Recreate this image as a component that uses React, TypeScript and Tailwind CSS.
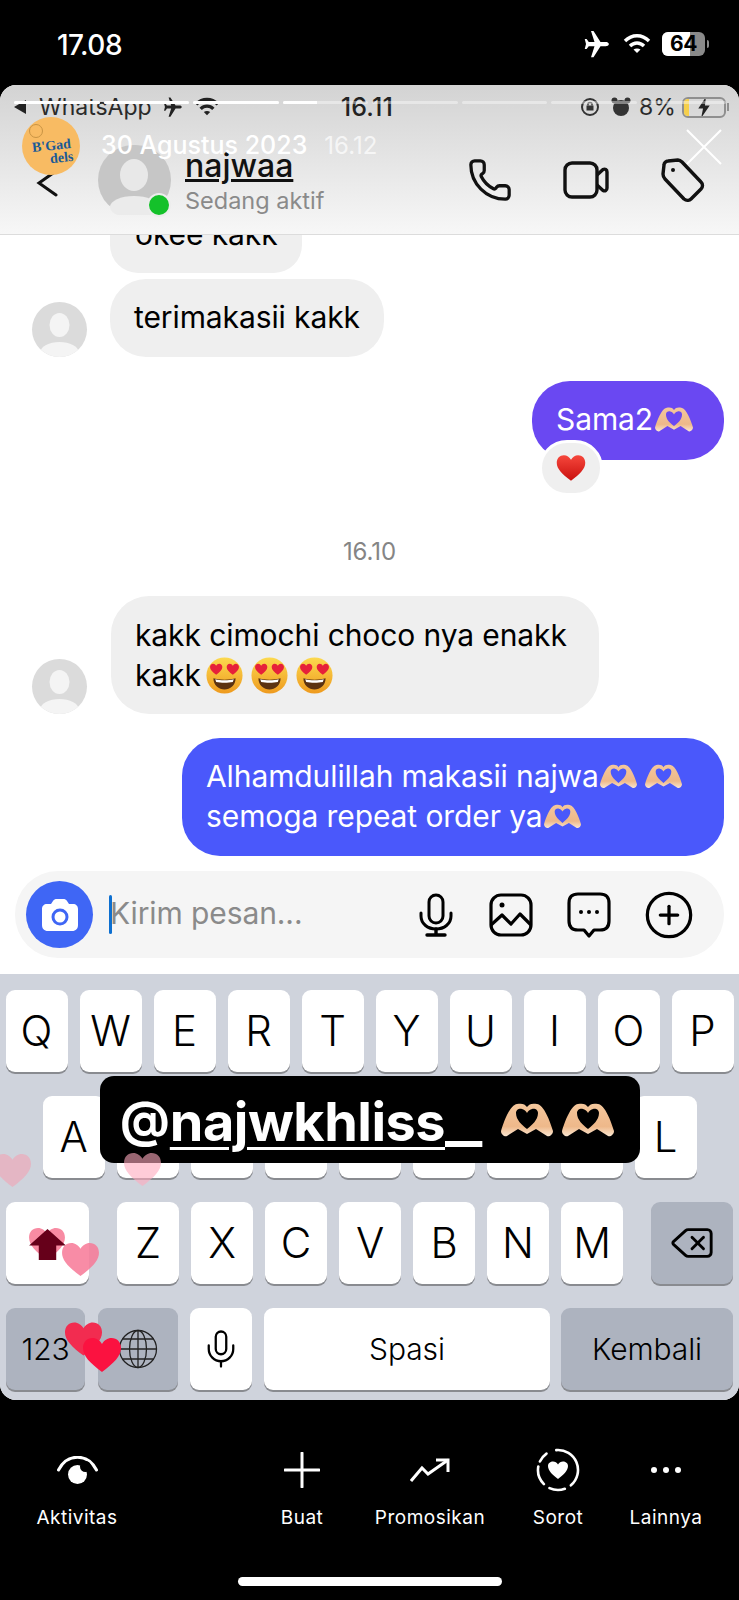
import { CirclePlus, Delete, Mic, Phone } from "lucide-react";

const heartPath =
  "M20 35 C 8 26, 1 19, 1 11 C 1 5, 5 1, 10.500 1 C 14.500 1, 18 3.500, 20 7 C 22 3.500, 25.500 1, 29.500 1 C 35 1, 39 5, 39 11 C 39 19, 32 26, 20 35 Z";

function HeartHands({ className }: { className: string }) {
  return (
    <svg viewBox="0 0 52 34" className={className}>
      <defs>
        <linearGradient id="tangan" x1="0" y1="0" x2="0" y2="1">
          <stop offset="0" stopColor="#f4c79c" />
          <stop offset="0.700" stopColor="#eeb88a" />
          <stop offset="1" stopColor="#fbe6d0" />
        </linearGradient>
      </defs>
      <path
        fillRule="evenodd"
        fill="url(#tangan)"
        d="M0 28 C 3 18, 9 2, 16 1 C 21 0, 24 1, 26 4 C 28 1, 31 0, 36 1 C 43 2, 49 18, 52 28 C 52 32, 48 34, 46 33 L 35 26 L 26 31 L 17 26 L 6 33 C 4 34, 0 32, 0 28 Z M26 26 C 21 22, 15 17, 15 10 C 15 6, 19 5, 21 6 C 24 7, 25 8, 26 10 C 27 8, 28 7, 31 6 C 33 5, 37 6, 37 10 C 37 17, 31 22, 26 26 Z"
      />
    </svg>
  );
}

function LoveFace() {
  return (
    <svg viewBox="0 0 40 40" className="w-[37px] h-[37px]">
      <defs>
        <linearGradient id="face" x1="0" y1="0" x2="0" y2="1">
          <stop offset="0" stopColor="#fcd94f" />
          <stop offset="1" stopColor="#ee9a1e" />
        </linearGradient>
      </defs>
      <circle cx="20" cy="20" r="19.500" fill="url(#face)" />
      <path d="M8 23 C 13 25, 27 25, 32 23 C 32 31, 26 35, 20 35 C 14 35, 8 31, 8 23 Z" fill="#5c3211" />
      <path d="M10 24 C 15 25.500, 25 25.500, 30 24 L 29 27 C 24 28, 16 28, 11 27 Z" fill="#fff" />
      <g transform="translate(4 7) scale(0.35)">
        <path d={heartPath} fill="#e6213a" />
      </g>
      <g transform="translate(22 7) scale(0.35)">
        <path d={heartPath} fill="#e6213a" />
      </g>
    </svg>
  );
}

function Avatar() {
  return (
    <div className="w-[55px] h-[55px] rounded-full bg-[#dbdbdb] overflow-hidden shrink-0">
      <svg viewBox="0 0 55 55" className="w-full h-full">
        <ellipse cx="27.500" cy="23" rx="10" ry="12" fill="#f4f4f4" />
        <ellipse cx="27.500" cy="50" rx="19" ry="10" fill="#f4f4f4" />
      </svg>
    </div>
  );
}

function Key({ label, className = "w-[62px]" }: { label: string; className?: string }) {
  return (
    <div
      className={`${className} h-[82px] rounded-[9px] bg-white shadow-[0_2px_0_#898b90] flex items-center justify-center text-[42px] font-light text-black`}
    >
      {label}
    </div>
  );
}

function GrayKey({ children, className }: { children: React.ReactNode; className: string }) {
  return (
    <div
      className={`${className} h-[82px] rounded-[9px] bg-[#adb3bf] shadow-[0_2px_0_#898b90] flex items-center justify-center text-black`}
    >
      {children}
    </div>
  );
}

function Heart({ className, fill }: { className: string; fill: string }) {
  return (
    <svg viewBox="0 0 40 36" className={`absolute ${className}`}>
      <path d={heartPath} fill={fill} />
    </svg>
  );
}

function BottomItem({
  label,
  className,
  children,
}: {
  label: string;
  className: string;
  children: React.ReactNode;
}) {
  return (
    <div className={`${className} flex flex-col items-center`}>
      <div className="h-[44px] flex items-center justify-center">{children}</div>
      <span className="mt-[14px] text-[19px] leading-[24px] tracking-[0.5px] text-white">{label}</span>
    </div>
  );
}

const segments = [true, true, true, false, false, false, false, false];

export default function App() {
  return (
    <div className="w-[739px] h-[1600px] bg-black overflow-hidden font-['Inter',sans-serif]">
      {/* status bar luar */}
      <div className="h-[85px] flex items-start justify-between pl-[57px] pr-[30px] pt-[30px] text-white">
        <span className="text-[28px] leading-[30px] font-medium tracking-[-0.5px]">17.08</span>
        <div className="flex items-center h-[30px] mt-[-1px]">
          <svg viewBox="0 0 24 24" className="w-[30px] h-[30px]" fill="#fff">
            <path d="M21.500 12 C 21.500 10.800 20 10.300 19 10.300 L 14.800 10.300 L 9.200 1.500 L 7.200 1.500 L 10 10.300 L 5.400 10.300 L 3.700 8 L 2.200 8 L 3.200 12 L 2.200 16 L 3.700 16 L 5.400 13.700 L 10 13.700 L 7.200 22.500 L 9.200 22.500 L 14.800 13.700 L 19 13.700 C 20 13.700 21.500 13.200 21.500 12 Z" />
          </svg>
          <svg viewBox="0 0 28 22" className="w-[28px] h-[22px] ml-[11px]" fill="none" stroke="#fff" strokeWidth="3.400">
            <path d="M2 8 C 9 1, 19 1, 26 8" />
            <path d="M7 13 C 11 9, 17 9, 21 13" />
            <path d="M14 20 L10.500 16.500 C 12.500 15, 15.500 15, 17.500 16.500 Z" fill="#fff" stroke="none" />
          </svg>
          <div className="relative ml-[11px] w-[43px] h-[24px] rounded-[6px] overflow-hidden bg-[#8a8a8a] flex">
            <div className="w-[28px] h-full bg-white" />
            <span className="absolute left-[8px] top-0 text-[21px] font-bold text-black leading-[24px] tracking-[-0.5px]">64</span>
          </div>
          <div className="ml-[2px] w-[2px] h-[8px] rounded-r bg-[#8a8a8a]" />
        </div>
      </div>

      {/* kartu story */}
      <div className="relative h-[1315px] w-full rounded-[16px] bg-white overflow-hidden flex flex-col">
        <header className="relative z-10 h-[150px] shrink-0 bg-gradient-to-b from-[#d3d3d3] to-[#f7f7f7] border-b border-[#dcdcdc] pt-[10px]">
          <div className="relative h-[24px] flex items-center pl-[14px] pr-[10px] text-[#2a2a2a]">
            <svg viewBox="0 0 12 14" className="w-[12px] h-[14px]" fill="#222">
              <path d="M0 7 L12 0 L12 14 Z" />
            </svg>
            <span className="ml-[13px] text-[23px] leading-[24px]">WhatsApp</span>
            <svg viewBox="0 0 24 24" className="ml-[10px] w-[22px] h-[22px]" fill="#222">
              <path d="M21.500 12 C 21.500 10.800 20 10.300 19 10.300 L 14.800 10.300 L 9.200 1.500 L 7.200 1.500 L 10 10.300 L 5.400 10.300 L 3.700 8 L 2.200 8 L 3.200 12 L 2.200 16 L 3.700 16 L 5.400 13.700 L 10 13.700 L 7.200 22.500 L 9.200 22.500 L 14.800 13.700 L 19 13.700 C 20 13.700 21.500 13.200 21.500 12 Z" />
            </svg>
            <svg viewBox="0 0 28 22" className="ml-[10px] w-[26px] h-[20px]" fill="none" stroke="#222" strokeWidth="3.600">
              <path d="M2 8 C 9 1, 19 1, 26 8" />
              <path d="M7 13 C 11 9, 17 9, 21 13" />
              <path d="M14 20 L10.500 16.500 C 12.500 15, 15.500 15, 17.500 16.500 Z" fill="#222" stroke="none" />
            </svg>
            <span className="ml-[121px] text-[25px] leading-[24px] font-medium tracking-[0.2px] text-[#222]">16.11</span>
            <svg viewBox="0 0 20 20" className="ml-[187px] w-[20px] h-[20px]" fill="none" stroke="#333" strokeWidth="2">
              <circle cx="10" cy="10" r="8" />
              <rect x="6.500" y="8.500" width="7" height="5" fill="#333" stroke="none" />
              <path d="M8 8.500 V7 C 8 5, 12 5, 12 7 V8.500" strokeWidth="1.400" />
            </svg>
            <svg viewBox="0 0 20 20" className="ml-[11px] w-[20px] h-[20px]" fill="#333">
              <circle cx="10" cy="11" r="8" />
              <circle cx="3.500" cy="3.500" r="3" />
              <circle cx="16.500" cy="3.500" r="3" />
            </svg>
            <span className="ml-[8px] text-[23px] leading-[24px]">8%</span>
            <div className="relative ml-[6px] w-[44px] h-[21px] rounded-[6px] border-2 border-[#8f8f8f] overflow-hidden">
              <div className="w-[5px] h-full bg-[#f5cf4b]" />
              <svg viewBox="0 0 14 22" className="absolute left-[13px] top-[-2px] w-[14px] h-[21px]" fill="#222">
                <path d="M9 0 L1 12 L6 12 L4 22 L13 9 L8 9 Z" />
              </svg>
            </div>
            <div className="ml-[1px] w-[2px] h-[8px] bg-[#8f8f8f]" />
          </div>

          <div className="mt-[26px] h-[70px] flex items-center pr-[34px]">
            <svg viewBox="0 0 22 28" className="ml-[36px] w-[22px] h-[28px] mt-[6px]" fill="none" stroke="#111" strokeWidth="3" strokeLinecap="round">
              <path d="M20 2 L3 14 L20 26" />
            </svg>
            <div className="relative ml-[40px] w-[73px] h-[70px] rounded-full bg-[#c6c6c6]">
              <svg viewBox="0 0 73 70" className="w-full h-full">
                <ellipse cx="36" cy="30" rx="14" ry="16" fill="#e8e8e8" />
                <ellipse cx="36" cy="62" rx="24" ry="11" fill="#ebebeb" />
              </svg>
              <div className="absolute right-[0px] bottom-[-2px] w-[24px] h-[24px] rounded-full bg-[#14c12a] border-2 border-[#ededed]" />
            </div>
            <div className="ml-[14px] mt-[2px] flex flex-col">
              <span className="text-[32px] leading-[36px] font-medium text-[#111] underline decoration-[3px] underline-offset-[2px]">najwaa</span>
              <span className="mt-[3px] text-[23.500px] leading-[28px] text-[#8a8a8a]">Sedang aktif</span>
            </div>
            <div className="ml-auto flex items-center">
              <Phone size={46} strokeWidth={1.700} color="#111" />
              <svg viewBox="0 0 46 38" className="ml-[50px] w-[46px] h-[38px]" fill="none" stroke="#111" strokeWidth="3.400" strokeLinejoin="round">
                <rect x="2" y="2" width="32" height="34" rx="7" />
                <path d="M34 14 L40 8.500 C 42 7.500 44 8.500 44 11 V27 C 44 29.500 42 30.500 40 29.500 L34 24" />
              </svg>
              <svg viewBox="0 0 44 44" className="ml-[52px] w-[44px] h-[44px]" fill="none" stroke="#111" strokeWidth="3.400" strokeLinejoin="round">
                <path d="M7 3 L17 2 C 19 2, 20 3, 21 4 L40 24 C 42 26, 42 29, 40 31 L30 41 C 28 43, 25 42.500, 23 41 L4 21 C 3 20, 2 18, 2 16 L3 7 C 3 5, 5 3, 7 3 Z" />
                <circle cx="12" cy="12" r="2" fill="#111" stroke="none" />
              </svg>
            </div>
          </div>
        </header>

        {/* isi chat */}
        <div className="flex flex-col flex-1 min-h-0 text-[30px] leading-[40px] tracking-[-0.1px] text-black">
          <div className="ml-[110px] mt-[-40px] w-[192px] h-[78px] rounded-[28px] bg-[#efefef] flex items-center pl-[25px]">
            okee kakk
          </div>
          <div className="mt-[6px] ml-[32px] flex items-end gap-[23px]">
            <Avatar />
            <div className="h-[78px] rounded-[36px] bg-[#efefef] flex items-center px-[24px] pb-[2px]">terimakasii kakk</div>
          </div>

          <div className="relative self-end mr-[15px] mt-[24px] h-[79px] w-[192px] rounded-[38px] bg-[#6a48f2] flex items-center pl-[24px] pb-[3px] text-white">
            Sama2
            <HeartHands className="ml-[2px] w-[38px] h-[25px]" />
            <div className="absolute left-[7px] top-[59px] w-[58px] h-[50px] rounded-full bg-[#efefef] border-[3px] border-white box-content flex items-center justify-center">
              <svg viewBox="0 0 40 36" className="w-[30px] h-[28px]">
                <defs>
                  <linearGradient id="merah" x1="0" y1="0" x2="0" y2="1">
                    <stop offset="0" stopColor="#f6473c" />
                    <stop offset="1" stopColor="#c9100e" />
                  </linearGradient>
                </defs>
                <path d={heartPath} fill="url(#merah)" />
              </svg>
            </div>
          </div>

          <div className="mt-[77px] text-center text-[24px] leading-[30px] text-[#858585]">16.10</div>

          <div className="mt-[29px] ml-[32px] flex items-end gap-[24px]">
            <Avatar />
            <div className="w-[488px] h-[118px] rounded-[38px] bg-[#efefef] px-[24px] py-[19px]">
              <div>kakk cimochi choco nya enakk</div>
              <div className="flex items-center">
                kakk
                <span className="ml-[5px] flex gap-[8px]">
                  <LoveFace />
                  <LoveFace />
                  <LoveFace />
                </span>
              </div>
            </div>
          </div>

          <div className="self-end mt-[24px] mr-[15px] w-[542px] h-[118px] rounded-[38px] bg-[#4a58fb] px-[24px] py-[18px] text-white">
            <div className="flex items-center">
              Alhamdulillah makasii najwa
              <HeartHands className="ml-[1px] w-[37px] h-[25px]" />
              <HeartHands className="ml-[8px] w-[37px] h-[25px]" />
            </div>
            <div className="flex items-center">
              semoga repeat order ya
              <HeartHands className="ml-[1px] w-[37px] h-[25px]" />
            </div>
          </div>

          <div className="mt-[15px] mx-[15px] h-[87px] rounded-[43px] bg-[#f5f5f5] flex items-center pl-[11px]">
            <div className="w-[67px] h-[67px] rounded-full bg-[#3f66f5] flex items-center justify-center">
              <svg viewBox="0 0 36 32" className="w-[36px] h-[32px]">
                <path
                  d="M11 2 C 12 0.500, 13 0, 15 0 H21 C 23 0, 24 0.500, 25 2 L27 5 H31 C 34 5, 36 7, 36 10 V26 C 36 29.500, 34 32, 30 32 H6 C 2 32, 0 29.500, 0 26 V10 C 0 7, 2 5, 5 5 H9 Z"
                  fill="#fff"
                />
                <circle cx="18" cy="18" r="7" fill="none" stroke="#3f66f5" strokeWidth="3" />
              </svg>
            </div>
            <div className="ml-[16px] w-[3px] h-[39px] bg-[#0d6fd0] rounded" />
            <span className="ml-[-2px] pb-[3px] text-[30px] text-[#8a8a8a]">Kirim pesan...</span>
            <div className="ml-[117px] flex items-center">
              <svg viewBox="0 0 34 44" className="w-[34px] h-[44px]" fill="none" stroke="#000" strokeWidth="3" strokeLinecap="round">
                <rect x="10" y="2" width="14" height="28" rx="7" />
                <path d="M2 20 V23 C 2 31, 9 36, 17 36 C 25 36, 32 31, 32 23 V20" />
                <path d="M17 36 V42 M8 42 H26" strokeWidth="3.400" />
              </svg>
              <svg viewBox="0 0 44 44" className="ml-[36px] w-[44px] h-[44px]" fill="none" stroke="#000" strokeWidth="3.200" strokeLinejoin="round">
                <rect x="2" y="2" width="40" height="40" rx="10" />
                <circle cx="13" cy="12" r="2.500" fill="#000" stroke="none" />
                <path d="M2 32 L13 22 L22 31 L31 21 L42 32" />
              </svg>
              <svg viewBox="0 0 44 46" className="ml-[34px] w-[44px] h-[46px]" fill="none" stroke="#000" strokeWidth="3.200" strokeLinejoin="round">
                <path d="M11 2 H33 C 39 2, 42 5, 42 11 V29 C 42 35, 39 38, 33 38 H27 L22 44 L17 38 H11 C 5 38, 2 35, 2 29 V11 C 2 5, 5 2, 11 2 Z" />
                <circle cx="14" cy="20" r="2" fill="#000" stroke="none" />
                <circle cx="22" cy="20" r="2" fill="#000" stroke="none" />
                <circle cx="30" cy="20" r="2" fill="#000" stroke="none" />
              </svg>
              <CirclePlus size={52} strokeWidth={1.500} color="#000" className="ml-[32px]" />
            </div>
          </div>

          {/* keyboard */}
          <div className="mt-[16px] flex-1 bg-[#cfd3dc] pt-[16px] flex flex-col gap-[24px] relative">
            <div className="flex justify-center gap-[12px]">
              {"QWERTYUIOP".split("").map((k) => (
                <Key key={k} label={k} />
              ))}
            </div>
            <div className="flex justify-center gap-[12px]">
              {"ASDFGHJKL".split("").map((k) => (
                <Key key={k} label={k} />
              ))}
            </div>
            <div className="flex justify-between px-[6px]">
              <div className="w-[83px] h-[82px] rounded-[9px] bg-white shadow-[0_2px_0_#898b90]" />
              <div className="flex gap-[12px]">
                {"ZXCVBNM".split("").map((k) => (
                  <Key key={k} label={k} />
                ))}
              </div>
              <GrayKey className="w-[82px]">
                <Delete size={46} strokeWidth={1.500} />
              </GrayKey>
            </div>
            <div className="flex px-[6px] text-[30px]">
              <GrayKey className="w-[79px]">
                <span className="text-[30px] font-light">123</span>
              </GrayKey>
              <GrayKey className="ml-[13px] w-[80px]">
                <svg viewBox="0 0 40 40" className="w-[40px] h-[40px]" fill="none" stroke="#222" strokeWidth="1.300">
                  <circle cx="20" cy="20" r="18.500" />
                  <ellipse cx="20" cy="20" rx="8.500" ry="18.500" />
                  <path d="M20 1.500 V38.500 M1.500 20 H38.500 M4.500 10 H35.500 M4.500 30 H35.500" />
                </svg>
              </GrayKey>
              <div className="ml-[12px] w-[62px] h-[82px] rounded-[9px] bg-white shadow-[0_2px_0_#898b90] flex items-center justify-center">
                <Mic size={42} strokeWidth={1.300} />
              </div>
              <div className="ml-[12px] w-[286px] h-[82px] rounded-[9px] bg-white shadow-[0_2px_0_#898b90] flex items-center justify-center font-light">
                Spasi
              </div>
              <GrayKey className="ml-[11px] w-[172px]">
                <span className="text-[30px] font-light">Kembali</span>
              </GrayKey>
            </div>
          </div>
        </div>

        {/* overlay story */}
        <div className="absolute z-20 left-[14px] right-[13px] top-[16px] flex gap-[4px]">
          {segments.map((done, i) => (
            <div key={i} className="relative flex-1 h-[3px] rounded-full bg-white/40 overflow-hidden">
              {done && <div className="absolute inset-0 bg-white" />}
              {i === 3 && <div className="absolute inset-y-0 left-0 w-[34px] bg-white" />}
            </div>
          ))}
        </div>
        <div className="absolute z-20 left-[22px] top-[32px] flex items-center">
          <div className="relative w-[58px] h-[58px] rounded-full bg-[#f8bb63] font-['Liberation_Serif',serif] font-bold text-[#1a5a96]">
            <div className="absolute left-[7px] top-[7px] w-[14px] h-[14px] rounded-full border border-[#c99443]" />
            <span className="absolute left-[10px] top-[22px] text-[14px] leading-[14px] rotate-[-6deg]">B'Gad</span>
            <span className="absolute left-[28px] top-[34px] text-[14px] leading-[14px] rotate-[-6deg]">dels</span>
          </div>
          <span className="ml-[21px] text-[25px] font-medium text-white">30 Agustus 2023</span>
          <span className="ml-[17px] text-[24px] text-white/70">16.12</span>
        </div>
        <svg viewBox="0 0 36 36" className="absolute z-20 right-[17px] top-[44px] w-[36px] h-[36px]" stroke="#fff" strokeWidth="2">
          <path d="M1 1 L35 35 M35 1 L1 35" />
        </svg>

        <div className="absolute z-20 left-[100px] top-[991px] w-[540px] h-[87px] rounded-[14px] bg-black flex items-center pl-[20px] text-white">
          <span className="text-[49px] leading-[56px] font-bold">@</span>
          <span className="mt-[4px] text-[54px] leading-[56px] font-bold tracking-[-0.5px]">
            <span className="underline decoration-[3px] underline-offset-[6px]">najwkhliss</span>
            <span className="inline-block origin-left scale-x-[1.45]">_</span>
          </span>
          <HeartHands className="absolute left-[401px] top-[27px] w-[52px] h-[34px]" />
          <HeartHands className="absolute left-[462px] top-[27px] w-[52px] h-[34px]" />
        </div>

        <Heart className="z-30 left-[-7px] top-[1068px] w-[39px] h-[35px]" fill="rgba(236,170,185,0.7)" />
        <Heart className="z-30 left-[123px] top-[1067px] w-[39px] h-[35px]" fill="rgba(255,170,190,0.6)" />
        <Heart className="z-30 left-[28px] top-[1142px] w-[38px] h-[34px]" fill="#f88ba3" />
        <svg viewBox="0 0 38 32" className="absolute z-30 left-[29px] top-[1144px] w-[37px] h-[31px]" fill="#66001a">
          <path d="M19 0 L38 17 H28 V32 H10 V17 H0 Z" />
        </svg>
        <Heart className="z-30 left-[61px] top-[1157px] w-[39px] h-[35px]" fill="rgba(247,120,150,0.85)" />
        <Heart className="z-30 left-[64px] top-[1236px] w-[39px] h-[36px]" fill="#f22c50" />
        <Heart className="z-30 left-[82px] top-[1252px] w-[40px] h-[36px]" fill="#fb1240" />
      </div>

      {/* aksi bawah */}
      <div className="h-[200px] relative">
        <div className="flex pt-[48px]">
          <BottomItem label="Aktivitas" className="ml-[27px] w-[100px]">
            <svg viewBox="0 0 41 28" className="w-[41px] h-[28px]" fill="none" stroke="#fff" strokeWidth="3" strokeLinecap="round">
              <path d="M1.500 14 C 10 -3, 31 -3, 39.500 14" />
              <circle cx="20.500" cy="18.500" r="9.500" fill="#fff" stroke="none" />
              <circle cx="28.500" cy="10.500" r="5.500" fill="#000" stroke="none" />
            </svg>
          </BottomItem>
          <BottomItem label="Buat" className="ml-[135px] w-[80px]">
            <svg viewBox="0 0 36 36" className="w-[36px] h-[36px]" stroke="#fff" strokeWidth="3" strokeLinecap="round">
              <path d="M18 1 V35 M1 18 H35" />
            </svg>
          </BottomItem>
          <BottomItem label="Promosikan" className="ml-[28px] w-[120px]">
            <svg viewBox="0 0 40 24" className="w-[40px] h-[24px]" fill="none" stroke="#fff" strokeWidth="3">
              <path d="M1 23 L12 10 L18 16 L38 2" />
              <path d="M26 2 H38 V14" />
            </svg>
          </BottomItem>
          <BottomItem label="Sorot" className="ml-[33px] w-[70px]">
            <svg viewBox="0 0 44 44" className="w-[44px] h-[44px]" fill="none" stroke="#fff" strokeWidth="2.600" strokeLinecap="round">
              <path d="M20.300 2.100 A 20 20 0 0 1 34.900 37.300" />
              <path d="M28.800 40.800 A 20 20 0 0 1 13.500 40.100" />
              <path d="M7.900 36.100 A 20 20 0 0 1 2.300 18.500" />
              <path d="M3.900 13.500 A 20 20 0 0 1 10.500 5.600" />
              <path d="M22 31 C 17 27, 12 23, 12 18 C 12 15, 14.500 13.500, 17 13.500 C 19 13.500, 21 14.500, 22 16.500 C 23 14.500, 25 13.500, 27 13.500 C 29.500 13.500, 32 15, 32 18 C 32 23, 27 27, 22 31 Z" fill="#fff" stroke="none" />
            </svg>
          </BottomItem>
          <BottomItem label="Lainnya" className="ml-[33px] w-[80px]">
            <div className="flex gap-[6px]">
              <span className="w-[6px] h-[6px] rounded-full bg-white" />
              <span className="w-[6px] h-[6px] rounded-full bg-white" />
              <span className="w-[6px] h-[6px] rounded-full bg-white" />
            </div>
          </BottomItem>
        </div>
        <div className="absolute bottom-[14px] left-[238px] w-[264px] h-[9px] rounded-full bg-white" />
      </div>
    </div>
  );
}
